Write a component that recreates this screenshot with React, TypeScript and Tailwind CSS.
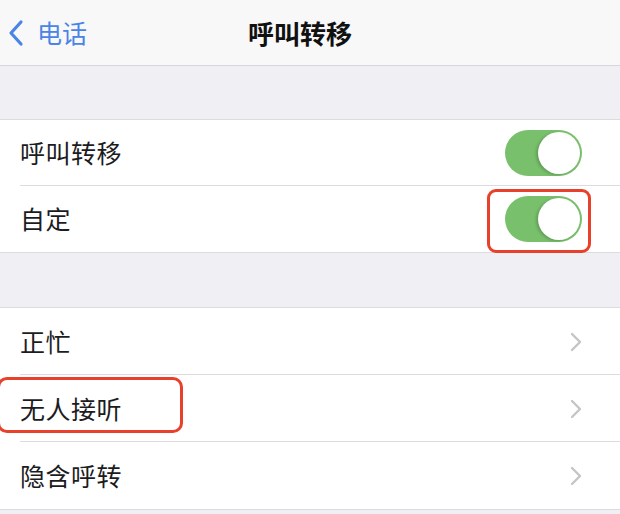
const font = { fontFamily: '"Noto Sans CJK SC", "Noto Sans", sans-serif' };

const Toggle = () => (
    <div className="w-[77px] h-[46px] rounded-full bg-[#78c06c] relative">
        <div className="absolute right-[2px] top-[2px] w-[42px] h-[42px] rounded-full bg-white shadow-[-2px_1px_3px_rgba(0,0,0,0.18)]" />
    </div>
);

const Chevron = () => (
    <svg width="12" height="20" viewBox="0 0 12 20" className="mr-[38px]">
        <path d="M2 2 L10 10 L2 18" fill="none" stroke="#c4c4c9" strokeWidth="2.4" strokeLinecap="round" strokeLinejoin="round" />
    </svg>
);

const Row = ({ label, right, last, tall }: { label: string; right: React.ReactNode; last?: boolean; tall?: boolean }) => (
    <div className={`${tall ? 'h-[67px]' : 'h-[66px]'} flex items-center pl-[20px] relative`}>
        <span className="flex-1 text-[25px] text-[#1c1c1e] tracking-[0.5px]">{label}</span>
        {right}
        {!last && <div className="absolute left-[20px] right-0 bottom-0 h-px bg-[#dcdce0]" />}
    </div>
);

export default function App() {
    return (
        <div className="w-[620px] h-[514px] bg-[#efeff4] overflow-hidden relative" style={font}>
            <div className="h-[66px] bg-[#f8f8f8] border-b border-[#d6d6da] flex items-center relative">
                <div className="flex items-center pl-[8px] text-[#4a84e6]">
                    <svg width="16" height="28" viewBox="0 0 16 28">
                        <path d="M13 3 L3 14 L13 25" fill="none" stroke="#4a84e6" strokeWidth="3.2" strokeLinecap="round" strokeLinejoin="round" />
                    </svg>
                    <span className="ml-[13px] text-[25px]">电话</span>
                </div>
                <div className="absolute left-0 right-0 text-center text-[26px] font-semibold text-[#111] pointer-events-none pr-[20px]">呼叫转移</div>
            </div>

            <div className="h-[53px]" />

            <div className="bg-white border-y border-[#dcdce0]">
                <Row label="呼叫转移" right={<div className="mr-[38px]"><Toggle /></div>} />
                <Row label="自定" right={<div className="mr-[38px]"><Toggle /></div>} last />
            </div>

            <div className="h-[54px]" />

            <div className="bg-white border-y border-[#dcdce0]">
                <Row label="正忙" right={<Chevron />} tall />
                <Row label="无人接听" right={<Chevron />} tall />
                <Row label="隐含呼转" right={<Chevron />} tall last />
            </div>

            {/* red highlight boxes */}
            <div className="absolute left-[487px] top-[189px] w-[104px] h-[64px] border-[3px] border-[#e8402a] rounded-[9px]" />
            <div className="absolute left-[-3px] top-[377px] w-[186px] h-[56px] border-[3px] border-[#e8402a] rounded-[10px]" />
        </div>
    );
}
